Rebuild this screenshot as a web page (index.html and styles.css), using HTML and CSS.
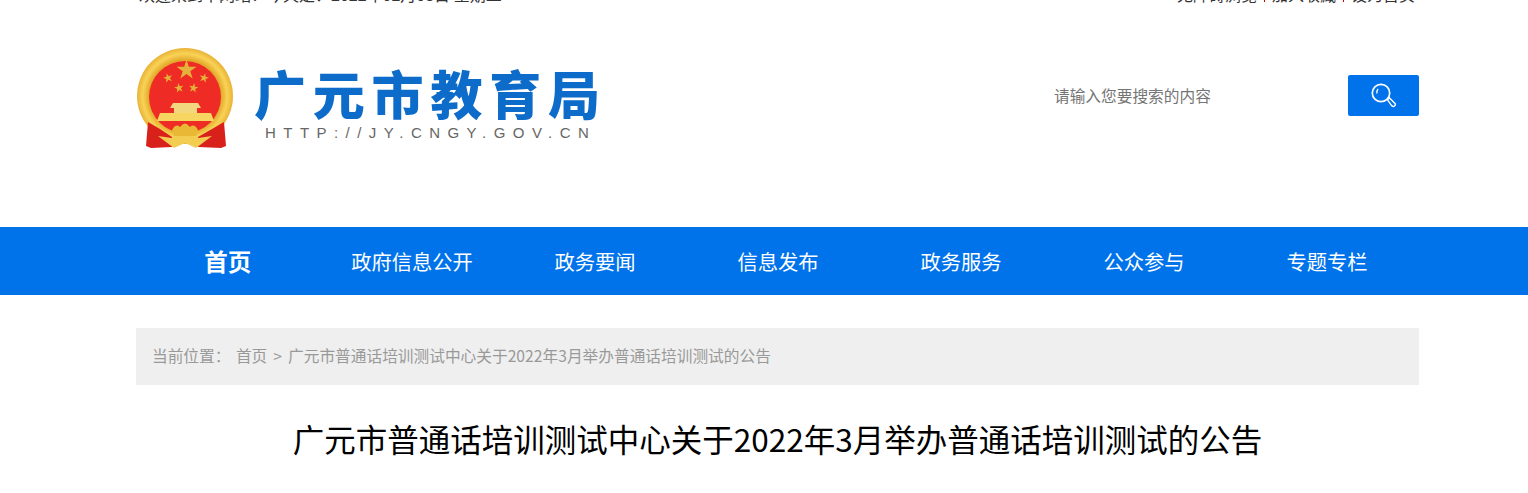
FILE: index.html
```html
<!DOCTYPE html>
<html lang="zh-CN">
<head>
    <meta charset="UTF-8">
    <title>广元市教育局</title>
    <link rel="stylesheet" href="styles.css">
</head>
<body>
    <div class="top-bar">
        <div class="wrap top-inner">
            <div class="welcome">欢迎来到本网站！今天是：<span class="date">2022年02月08日</span> 星期二</div>
            <div class="top-links"><a>无障碍浏览</a><i></i><a>加入收藏</a><i></i><a>设为首页</a></div>
        </div>
    </div>

    <header class="wrap header">
        <div class="logo">
            <svg class="emblem" viewBox="136 44 100 106">
                <defs>
                    <polygon id="star" points="0,-1 .225,-.309 .951,-.309 .363,.118 .588,.809 0,.382 -.588,.809 -.363,.118 -.951,-.309 -.225,-.309"/>
                    <radialGradient id="ring" cx="50%" cy="50%" r="50%">
                        <stop offset="75%" stop-color="#e3a92c"/>
                        <stop offset="88%" stop-color="#f8d356"/>
                        <stop offset="100%" stop-color="#e9b237"/>
                    </radialGradient>
                </defs>
                <circle cx="185" cy="96" r="48" fill="url(#ring)"/>
                <circle cx="185" cy="97" r="36" fill="#ee2b24"/>
                <g fill="#e4b23a">
                    <use href="#star" transform="translate(186.500 70) scale(10.500)"/>
                    <use href="#star" transform="translate(168 78) rotate(-15) scale(5)"/>
                    <use href="#star" transform="translate(204 78) rotate(15) scale(5)"/>
                    <use href="#star" transform="translate(179 88) rotate(-10) scale(5)"/>
                    <use href="#star" transform="translate(193.500 88) rotate(10) scale(5)"/>
                </g>
                <path d="M173 103 H198 L201 108 H197 V113 H174 V108 H170 Z" fill="#f2d77e"/>
                <path d="M160 113 H211 L214 121 H157 Z" fill="#f6d560"/>
                <path d="M148 122 L160 129 L172 137 L172 147 L151 148 L146 146 Z" fill="#d9211b"/>
                <path d="M224 122 L212 129 L198 137 L198 147 L221 148 L226 146 Z" fill="#d9211b"/>
                <path d="M172 130 Q176 123 180 127 Q185 120 190 127 Q194 123 198 130 L196 136 H174 Z" fill="#e9b935"/>
                <path d="M158 136 L172 138 L185 136 L198 138 L212 136 L204 142 L196 148 L185 143 L174 148 L166 142 Z" fill="#f3cc52"/>
            </svg>
            <div class="logo-text">
                <div class="logo-name">广元市教育局</div>
                <div class="logo-url">HTTP://JY.CNGY.GOV.CN</div>
            </div>
        </div>
        <div class="search">
            <div class="search-input">请输入您要搜索的内容</div>
            <button class="search-btn">
                <svg viewBox="0 0 26 26" width="26" height="26" fill="none" stroke="#fff">
                    <circle cx="10" cy="10" r="8.700" stroke-width="1.700"/>
                    <path d="M5.800 10.500 Q5.700 7.800 7 6" stroke-width="1.300"/>
                    <path d="M16.500 16.800 L18.500 15 L24 20.500 Q25 22 23.500 23 Q22 24 20.800 22.800 Z" stroke-width="1.400"/>
                </svg>
            </button>
        </div>
    </header>

    <nav class="nav">
        <div class="wrap nav-inner">
            <a class="nav-item nav-home">首页</a>
            <a class="nav-item">政府信息公开</a>
            <a class="nav-item">政务要闻</a>
            <a class="nav-item">信息发布</a>
            <a class="nav-item">政务服务</a>
            <a class="nav-item">公众参与</a>
            <a class="nav-item">专题专栏</a>
        </div>
    </nav>

    <div class="wrap crumbs">
        <span class="crumbs-label">当前位置：</span>首页<span class="crumbs-sep">&gt;</span>广元市普通话培训测试中心关于2022年3月举办普通话培训测试的公告
    </div>

    <h1 class="wrap title">广元市普通话培训测试中心关于2022年3月举办普通话培训测试的公告</h1>
</body>
</html>
```

FILE: styles.css
```css
html, body {
    margin: 0;
    padding: 0;
    height: 493px;
    overflow: hidden;
}
body {
    font-family: "Noto Sans CJK SC", "Liberation Sans", sans-serif;
    background: #fff;
    color: #333;
}
.wrap {
    width: 1283px;
    margin-left: 136px;
}
.top-bar {
    height: 5px;
    overflow: hidden;
}
.top-inner {
    display: flex;
    justify-content: space-between;
    align-items: flex-end;
    height: 5px;
    font-size: 16px;
    line-height: 22px;
    color: #333;
}
.welcome {
    padding-left: 3px;
}
.top-links {
    display: flex;
    align-items: center;
    padding-right: 4px;
}
.top-links i {
    width: 1px;
    height: 16px;
    background: #c00;
    margin: 0 7px;
}
.header {
    height: 222px;
    display: flex;
    justify-content: space-between;
    align-items: flex-start;
}
.logo {
    display: flex;
    margin-top: 39px;
}
.emblem {
    width: 100px;
    height: 106px;
}
.logo-text {
    margin-left: 18px;
    margin-top: 20px;
}
.logo-name {
    font-size: 52px;
    line-height: 58px;
    font-weight: 900;
    color: #0d6cc9;
    letter-spacing: 6.800px;
    white-space: nowrap;
}
.logo-url {
    font-family: "Liberation Sans", sans-serif;
    font-size: 15px;
    line-height: 16px;
    color: #666;
    letter-spacing: 7.450px;
    margin: 3px 0 0 11px;
    white-space: nowrap;
}
.search {
    display: flex;
    align-items: center;
    margin-top: 70px;
}
.search-input {
    width: 294px;
    font-size: 15.700px;
    color: #757575;
}
.search-btn {
    width: 71px;
    height: 41px;
    border: none;
    border-radius: 2px;
    background: #0073eb;
    padding: 0;
    display: flex;
    align-items: center;
    justify-content: center;
}
.nav {
    height: 68px;
    background: #0073eb;
}
.nav-inner {
    display: flex;
    height: 68px;
    align-items: center;
    color: #fff;
    font-size: 20.300px;
}
.nav-item {
    width: 183px;
    text-align: center;
    white-space: nowrap;
}
.nav-home {
    width: 183.500px;
    margin-right: 1px;
    font-size: 23.500px;
    font-weight: 700;
}
.crumbs {
    margin-top: 33px;
    height: 57px;
    line-height: 56px;
    box-sizing: border-box;
    padding-left: 16px;
    background: #efefef;
    color: #999;
    font-size: 15.700px;
}
.crumbs-label {
    margin-right: 5.500px;
}
.crumbs-sep {
    margin: 0 6px;
}
.title {
    margin-top: 28px;
    margin-bottom: 0;
    font-size: 31.500px;
    line-height: 50px;
    font-weight: 400;
    color: #000;
    text-align: center;
}
```
